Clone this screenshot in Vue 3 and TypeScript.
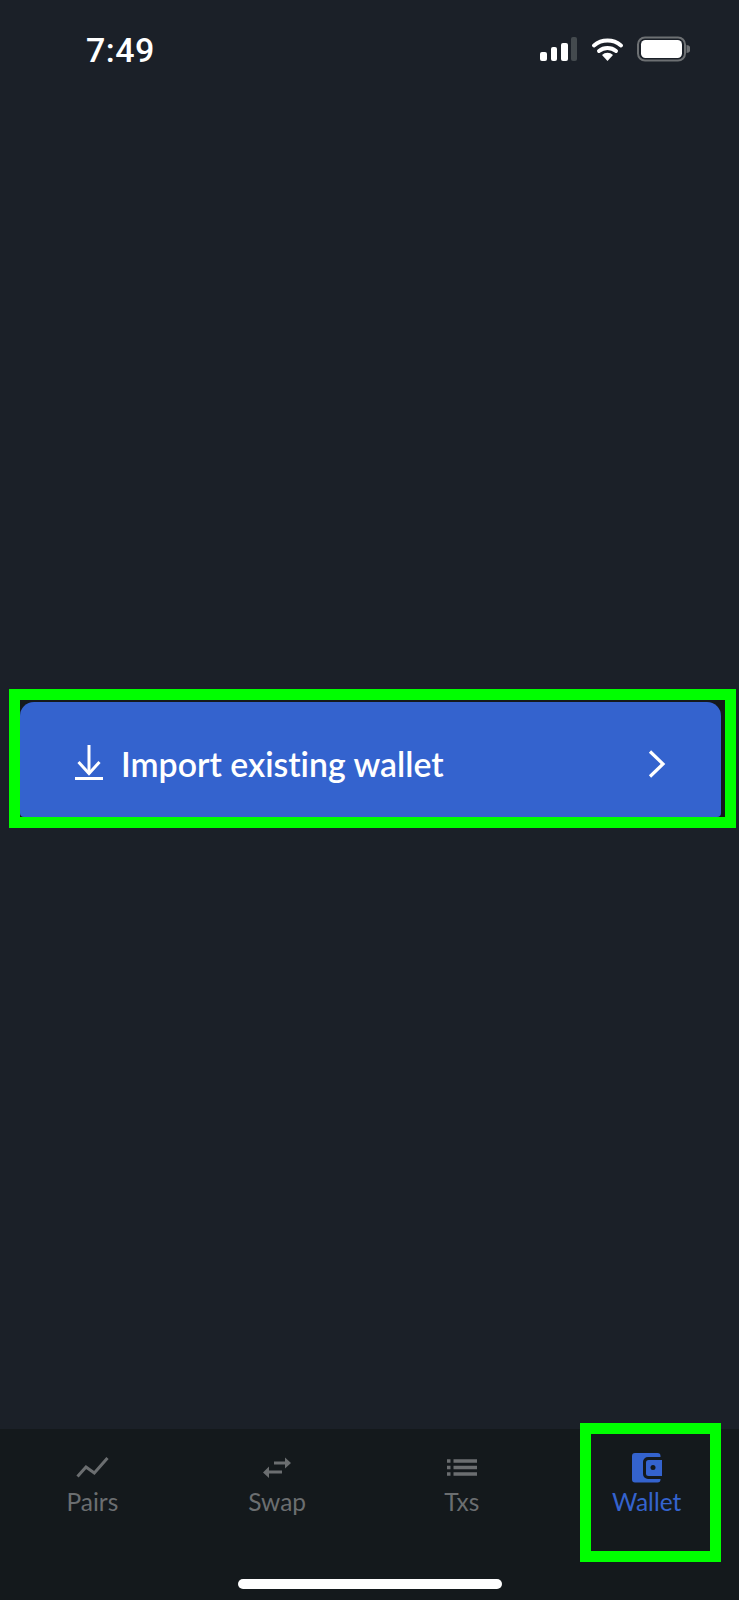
<template>
  <div class="screen">
    <!-- status bar -->
    <div class="status-bar">
      <span class="time">7:49</span>
      <svg class="status-icons" width="150" height="30" viewBox="0 0 150 30">
        <rect x="0" y="17" width="7" height="9" rx="2" fill="#fff" />
        <rect x="11" y="12" width="6" height="14" rx="2" fill="#fff" />
        <rect x="21" y="8" width="7" height="18" rx="2" fill="#fff" />
        <rect x="31" y="2" width="6" height="24" rx="2" fill="#444a4e" />
        <path d="M54 10.500a21 21 0 0 1 27 0M59 16a13.500 13.500 0 0 1 17 0" fill="none" stroke="#fff" stroke-width="4" stroke-linecap="round" />
        <path d="M62 20a8 8 0 0 1 11 0l-5.500 6z" fill="#fff" />
        <rect x="98" y="2.500" width="47" height="23" rx="7" fill="none" stroke="#6d7073" stroke-width="2" />
        <rect x="101" y="5" width="41" height="18" rx="4.500" fill="#fff" />
        <path d="M146.500 10a4 4 0 0 1 0 8z" fill="#6d7073" />
      </svg>
    </div>

    <!-- main action -->
    <main class="content">
      <div class="highlight">
        <button class="import-btn" type="button">
          <span class="import-label">
            <svg class="import-icon" width="28" height="36" viewBox="0 0 28 36" fill="none" stroke="#fff" stroke-width="3">
              <path d="M14 1v29" />
              <path d="M3.500 18 14 29.500 24.500 18" />
              <path d="M0 34.500h28" />
            </svg>
            Import existing wallet
          </span>
          <svg width="20" height="30" viewBox="0 0 20 30" fill="none" stroke="#fff" stroke-width="3.200">
            <path d="M3 2.500 16 15 3 27.500" />
          </svg>
        </button>
      </div>
    </main>

    <!-- tab bar -->
    <nav class="tab-bar">
      <div v-for="tab in tabs" :key="tab.label" :class="['tab', { active: tab.active }]">
        <svg width="36" height="32" viewBox="0 0 36 32" v-html="tab.icon"></svg>
        <span class="tab-label">{{ tab.label }}</span>
      </div>
      <div class="tab-highlight"></div>
      <div class="home-indicator"></div>
    </nav>
  </div>
</template>

<script setup lang="ts">
interface Tab {
  label: string;
  icon: string;
  active?: boolean;
}

const tabs: Tab[] = [
  {
    label: 'Pairs',
    icon: '<path d="M3.500 25.500 12 16 20.300 22 33.500 7" fill="none" stroke="#6b6e70" stroke-width="3" />'
  },
  {
    label: 'Swap',
    icon: '<path d="M15 12h12M10 21h13" fill="none" stroke="#6b6e70" stroke-width="3.200" /><path d="M26 6.500 32 12 26 17.500zM10 15.500 4 21.500 10 27z" fill="#6b6e70" />'
  },
  {
    label: 'Txs',
    icon: '<path d="M9.500 10H33M9.500 16.500H33M9.500 23H33M3 10h3.500M3 16.500h3.500M3 23h3.500" fill="none" stroke="#6b6e70" stroke-width="3.400" />'
  },
  {
    label: 'Wallet',
    active: true,
    icon: '<path d="M6 2h22.500a3 3 0 0 1 3 3v1H19a5 5 0 0 0-5 5v12a5 5 0 0 0 5 5h12.500v0.500a3 3 0 0 1-3 3H6a3 3 0 0 1-3-3V5a3 3 0 0 1 3-3z" fill="#3463ce" /><path d="M19.500 9H33v16H19.500a2.500 2.500 0 0 1-2.500-2.500v-11A2.500 2.500 0 0 1 19.500 9z" fill="#3463ce" /><circle cx="24" cy="16.500" r="2.500" fill="#14191c" />'
  }
];
</script>

<style scoped>
.screen {
  width: 739px;
  height: 1600px;
  display: flex;
  flex-direction: column;
  background: #1b2028;
  font-family: 'Lato', 'Liberation Sans', sans-serif;
  font-variant-ligatures: none;
  overflow: hidden;
}

.status-bar {
  height: 100px;
  flex: none;
  display: flex;
  justify-content: space-between;
  padding: 35px 49px 0 86px;
  box-sizing: border-box;
}

.time {
  font-family: 'Roboto', 'Liberation Sans', sans-serif;
  font-size: 34px;
  line-height: 30px;
  font-weight: 500;
  letter-spacing: 0.5px;
  color: #fff;
}

.content {
  flex: 1;
  padding: 589px 3px 0 9px;
}

.highlight {
  height: 139px;
  box-sizing: border-box;
  border: 11px solid #00ff00;
  background: #15191c;
}

.import-btn {
  width: 701px;
  height: 115px;
  margin-top: 2px;
  padding: 8px 54px 0 55px;
  display: flex;
  align-items: center;
  justify-content: space-between;
  box-sizing: border-box;
  border: none;
  border-radius: 14px 14px 4px 4px;
  background: #3463ce;
  color: #fff;
  font-family: inherit;
  font-size: 33.800px;
  font-weight: 600;
  font-variant-ligatures: none;
}

.import-label {
  display: flex;
  align-items: center;
  gap: 18px;
}

.import-icon {
  margin-top: -3px;
}

.tab-bar {
  position: relative;
  height: 171px;
  flex: none;
  display: grid;
  grid-template-columns: repeat(4, 1fr);
  background: #14191c;
}

.tab {
  display: flex;
  flex-direction: column;
  align-items: center;
  padding-top: 22px;
  color: #6b6e70;
  font-size: 24.500px;
  line-height: 30px;
}

.tab-label {
  margin-top: 4px;
}

.tab.active {
  color: #3463ce;
}

.tab-highlight {
  position: absolute;
  left: 580px;
  top: -6px;
  width: 141px;
  height: 139px;
  box-sizing: border-box;
  border: 11px solid #00ff00;
}

.home-indicator {
  position: absolute;
  left: 238px;
  top: 150px;
  width: 264px;
  height: 10px;
  border-radius: 5px;
  background: #fff;
}
</style>
